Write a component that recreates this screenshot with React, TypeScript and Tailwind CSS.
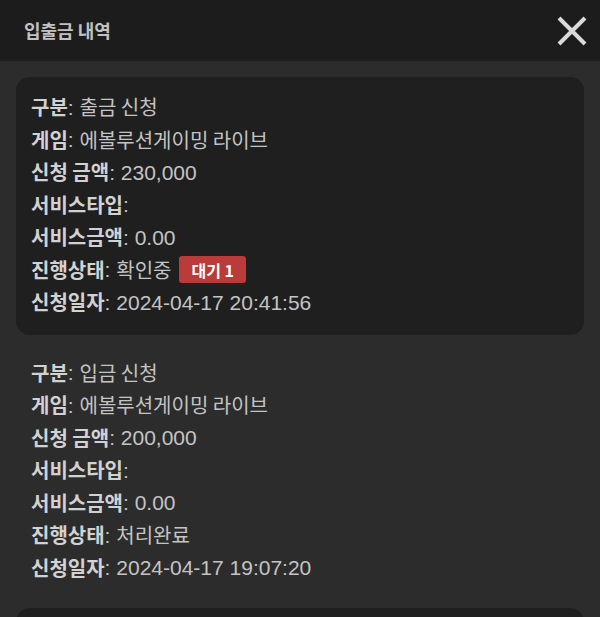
const records = [
  {
    type: "출금 신청",
    game: "에볼루션게이밍 라이브",
    amount: "230,000",
    serviceAmount: "0.00",
    status: "확인중",
    badge: "대기 1",
    date: "2024-04-17 20:41:56",
    highlight: true,
  },
  {
    type: "입금 신청",
    game: "에볼루션게이밍 라이브",
    amount: "200,000",
    serviceAmount: "0.00",
    status: "처리완료",
    badge: "",
    date: "2024-04-17 19:07:20",
    highlight: false,
  },
];

type Rec = (typeof records)[number];

const Row = ({ label, children }: { label: string; children?: React.ReactNode }) => (
  <div className="flex items-center h-[32.5px] whitespace-nowrap">
    <span className="font-bold text-[#d2d2d2]">{label}</span>
    <span className="text-[#c4c4c4] font-['Liberation_Sans'] text-[21px]">:&nbsp;</span>
    {children}
  </div>
);

const Value = ({ children }: { children: React.ReactNode }) => (
  <span className="text-[#c4c4c4]">{children}</span>
);

const Num = ({ children }: { children: React.ReactNode }) => (
  <span className="text-[#c4c4c4] font-['Liberation_Sans'] text-[21px]">{children}</span>
);

const RecordCard = ({ rec }: { rec: Rec }) => (
  <div
    className={`rounded-[14px] px-[15px] pt-[14px] pb-[16px] text-[20px] ${
      rec.highlight ? "bg-[#1f1f1f]" : ""
    }`}
  >
    <Row label="구분">
      <Value>{rec.type}</Value>
    </Row>
    <Row label="게임">
      <Value>{rec.game}</Value>
    </Row>
    <Row label="신청 금액">
      <Num>{rec.amount}</Num>
    </Row>
    <Row label="서비스타입" />
    <Row label="서비스금액">
      <Num>{rec.serviceAmount}</Num>
    </Row>
    <Row label="진행상태">
      <Value>{rec.status}</Value>
      {rec.badge && (
        <span className="ml-[8px] h-[27px] px-[12px] flex items-center rounded-[3px] bg-[#bb3a3a] text-white text-[16px] font-bold">
          {rec.badge}
        </span>
      )}
    </Row>
    <Row label="신청일자">
      <Num>{rec.date}</Num>
    </Row>
  </div>
);

export default function App() {
  return (
    <div
      className="h-screen overflow-hidden flex flex-col bg-[#2c2c2c]"
      style={{ fontFamily: '"Noto Sans CJK KR", "Liberation Sans", sans-serif' }}
    >
      {/* header */}
      <header className="h-[61px] shrink-0 flex items-center justify-between pl-[24px] pr-[13px] bg-[#1c1c1c]">
        <h1 className="text-[18px] font-bold text-[#c2c2c2]">입출금 내역</h1>
        <button aria-label="닫기" className="w-[30px] h-[30px] flex items-center justify-center">
          <svg width="30" height="30" viewBox="0 0 30 30">
            <path d="M2 2 L28 28 M28 2 L2 28" stroke="#dadada" strokeWidth="4" strokeLinecap="butt" />
          </svg>
        </button>
      </header>

      {/* list */}
      <div className="flex flex-col gap-[8px] px-[16px] pt-[16px]">
        {records.map((rec, i) => (
          <RecordCard key={i} rec={rec} />
        ))}
        {/* next record, scrolled below the fold */}
        <div className="h-[258px] shrink-0 rounded-[14px] bg-[#1f1f1f]" />
      </div>
    </div>
  );
}
